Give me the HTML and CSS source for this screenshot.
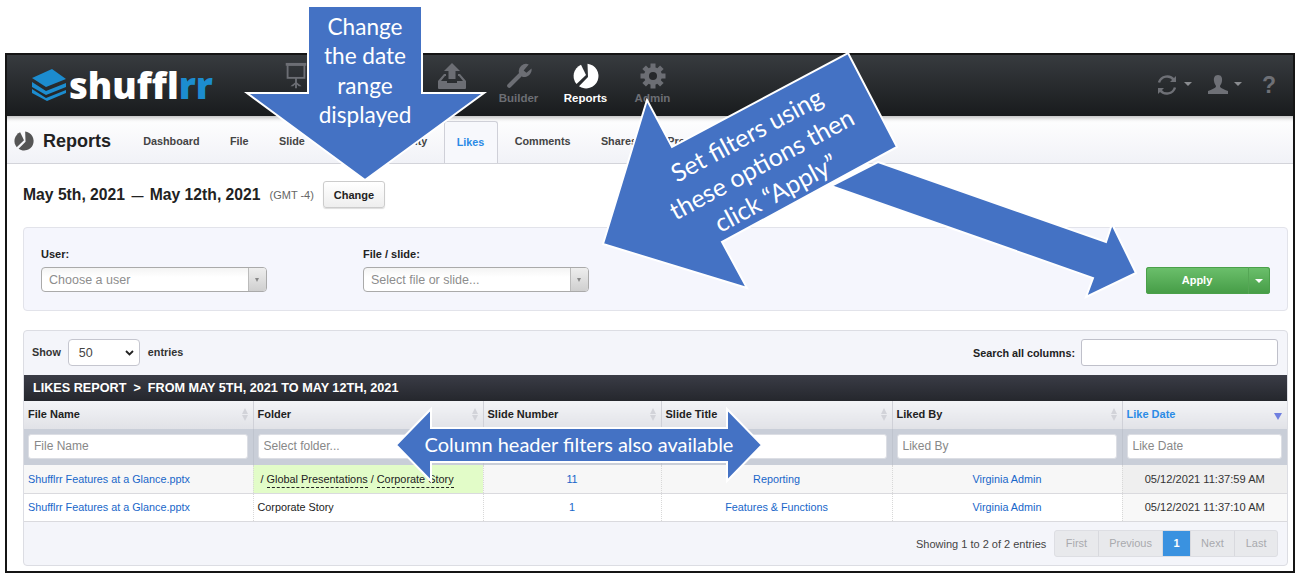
FILE: index.html
```html
<!DOCTYPE html>
<html>
<head>
  <title>Shufflrr - Likes Report</title>
  <link rel="stylesheet" href="styles.css">
</head>
<body>

<div class="frame">

  <header class="topbar">
    <a class="logo">
      <svg class="logo-mark" width="36" height="34" viewBox="0 0 36 34">
        <path class="blue" d="M1 10 L21 1 L35 11 L15 19 Z"/>
        <path class="blue" d="M1 14 L15 23 L35 15 L35 19 L15 27 L1 19 Z"/>
        <path class="blue" d="M1 21 L15 30 L35 22 L35 25 L16 33 L1 25 Z"/>
      </svg>
      <span>shuffl<b>rr</b></span>
    </a>
    <nav class="mainnav">
      <a class="navitem first">
        <svg width="26" height="30" viewBox="0 0 26 30">
          <rect x="4" y="3" width="18" height="14" fill="none" stroke="currentColor" stroke-width="2"/>
          <rect x="2" y="1" width="22" height="3"/>
          <path d="M12 17 h2 v5 l5 4 h-3 l-2 -2 v4 h-2 v-4 l-2 2 h-3 l5 -4 z"/>
        </svg>
      </a>
      <a class="navitem">
        <svg width="28" height="26" viewBox="0 0 28 26">
          <path d="M14 0 L22 8 H17.500 V16 H10.500 V8 H6 Z"/>
          <path d="M6 11 H8 V13 H7 L3 18 H9 V20 H19 V18 H25 L21 13 H20 V11 H22 L28 18 V25 Q28 26 27 26 H1 Q0 26 0 25 V18 Z"/>
        </svg>
      </a>
      <a class="navitem">
        <svg class="wrench" width="26" height="26" viewBox="0 0 28 28">
          <path d="M3.500 24.500 L17 11" stroke="currentColor" stroke-width="4.500" stroke-linecap="round"/>
          <path d="M24.500 1.500 A 8 8 0 0 0 14 11 L18 15 A 8 8 0 0 0 27.500 6 L22 10.500 L19 8 Z"/>
        </svg>
        <span>Builder</span>
      </a>
      <a class="navitem active">
        <svg width="26" height="26" viewBox="-13 -13 26 26">
          <use href="#pie" x="-13" y="-13" width="26" height="26"/>
        </svg>
        <span>Reports</span>
      </a>
      <a class="navitem">
        <svg width="26" height="26" viewBox="-13 -13 26 26">
          <circle r="6.500" fill="none" stroke="currentColor" stroke-width="5"/>
          <rect x="-2.500" y="-12.500" width="5" height="25"/>
          <rect x="-2.500" y="-12.500" width="5" height="25" transform="rotate(45)"/>
          <rect x="-2.500" y="-12.500" width="5" height="25" transform="rotate(90)"/>
          <rect x="-2.500" y="-12.500" width="5" height="25" transform="rotate(135)"/>
          <circle r="4" fill="#26282b"/>
        </svg>
        <span>Admin</span>
      </a>
    </nav>
    <div class="toptools">
      <a class="tool">
        <svg width="22" height="22" viewBox="0 0 22 22" fill="none" stroke="currentColor" stroke-width="2.500">
          <path d="M3 8.500 A 8.500 8.500 0 0 1 18 6"/>
          <path d="M19 13.500 A 8.500 8.500 0 0 1 4 16"/>
          <path d="M20 2 V8 H14 Z" fill="currentColor" stroke="none"/>
          <path d="M2 20 V14 H8 Z" fill="currentColor" stroke="none"/>
        </svg>
        <i class="caret"></i>
      </a>
      <a class="tool">
        <svg width="20" height="20" viewBox="0 0 20 20" fill="currentColor">
          <path d="M10 0 C13.500 0 14.500 3 14 6 C13.700 8 13 9.500 12 11 C12 13 14 13.500 20 16 V19 H0 V16 C6 13.500 8 13 8 11 C7 9.500 6.300 8 6 6 C5.500 3 6.500 0 10 0 Z"/>
        </svg>
        <i class="caret"></i>
      </a>
      <a class="tool help">?</a>
    </div>
  </header>

  <nav class="subnav">
    <div class="pagetitle">
      <svg width="20" height="20" viewBox="-13 -13 26 26">
        <use href="#pie" x="-13" y="-13" width="26" height="26"/>
      </svg>
      <h1>Reports</h1>
    </div>
    <ul class="tabs">
      <li>Dashboard</li>
      <li>File</li>
      <li>Slide</li>
      <li>Pins</li>
      <li>Activity</li>
      <li class="current">Likes</li>
      <li>Comments</li>
      <li>Shares</li>
      <li>Presenters</li>
    </ul>
  </nav>

  <main class="content">

    <div class="daterow">
      <span class="daterange">May 5th, 2021 <span class="dash">&mdash;</span> May 12th, 2021</span>
      <span class="gmt">(GMT -4)</span>
      <button class="btn-change">Change</button>
    </div>

    <section class="filters">
      <div class="field">
        <label>User:</label>
        <div class="combo"><span>Choose a user</span><i class="combo-arrow"></i></div>
      </div>
      <div class="field">
        <label>File / slide:</label>
        <div class="combo"><span>Select file or slide...</span><i class="combo-arrow"></i></div>
      </div>
      <div class="apply">
        <span class="apply-main">Apply</span>
        <span class="apply-drop"><i class="caret"></i></span>
      </div>
    </section>

    <section class="report">
      <div class="report-top">
        <div class="show">
          <span>Show</span>
          <div class="pagesize"><b>50</b>
            <svg width="9" height="6" viewBox="0 0 9 6" fill="none" stroke="#222" stroke-width="1.800"><path d="M1 1 L4.500 4.500 L8 1"/></svg>
          </div>
          <span>entries</span>
        </div>
        <div class="search">
          <span>Search all columns:</span>
          <input type="text">
        </div>
      </div>

      <div class="report-title">LIKES REPORT&nbsp; &gt;&nbsp; FROM MAY 5TH, 2021 TO MAY 12TH, 2021</div>

      <table class="grid">
        <colgroup>
          <col class="c-file"><col class="c-folder"><col class="c-num"><col class="c-title"><col class="c-by"><col class="c-date">
        </colgroup>
        <thead>
          <tr class="heads">
            <th><div class="th-in">File Name<i class="sort"></i></div></th>
            <th><div class="th-in">Folder<i class="sort"></i></div></th>
            <th><div class="th-in">Slide Number<i class="sort"></i></div></th>
            <th><div class="th-in">Slide Title<i class="sort"></i></div></th>
            <th><div class="th-in">Liked By<i class="sort"></i></div></th>
            <th class="sorted"><div class="th-in">Like Date<i class="sort-down"></i></div></th>
          </tr>
          <tr class="colfilters">
            <td><input type="text" placeholder="File Name"></td>
            <td><input type="text" placeholder="Select folder..."></td>
            <td><input type="text" placeholder="Slide Number"></td>
            <td><input type="text" placeholder="Slide Title"></td>
            <td><input type="text" placeholder="Liked By"></td>
            <td><input type="text" placeholder="Like Date"></td>
          </tr>
        </thead>
        <tbody>
          <tr class="odd">
            <td><a>Shufflrr Features at a Glance.pptx</a></td>
            <td class="folder-hit">/ <span class="crumb">Global Presentations</span> / <span class="crumb">Corporate Story</span></td>
            <td class="mid"><a>11</a></td>
            <td class="mid"><a>Reporting</a></td>
            <td class="mid"><a>Virginia Admin</a></td>
            <td class="mid datecell">05/12/2021 11:37:59 AM</td>
          </tr>
          <tr>
            <td><a>Shufflrr Features at a Glance.pptx</a></td>
            <td>Corporate Story</td>
            <td class="mid"><a>1</a></td>
            <td class="mid"><a>Features &amp; Functions</a></td>
            <td class="mid"><a>Virginia Admin</a></td>
            <td class="mid datecell">05/12/2021 11:37:10 AM</td>
          </tr>
        </tbody>
      </table>

      <div class="report-foot">
        <span>Showing 1 to 2 of 2 entries</span>
        <div class="pager">
          <a>First</a><a>Previous</a><a class="on">1</a><a>Next</a><a>Last</a>
        </div>
      </div>
    </section>

  </main>
</div>

<!-- callouts drawn over the screenshot -->
<svg class="callouts" width="1300" height="580" viewBox="0 0 1300 580">
  <defs>
    <symbol id="pie" viewBox="-13 -13 26 26">
      <path fill="currentColor" d="M1.500 -12.300 A 12.400 12.400 0 1 1 -7 10.200 L2 1 Z"/>
      <path fill="currentColor" d="M0 -1 L-5 -11.300 A 12.400 12.400 0 0 0 -9.500 8 Z"/>
    </symbol>
  </defs>
  <polygon class="arrow" points="308,6 422,6 422,93 484,93 365,180 247,93 308,93"/>
  <polygon class="arrow" points="878,162 1106,242 1112,224 1136,273 1086,297 1093,278 831,186"/>
  <polygon class="arrow" points="848,53 897,147 722,242 747,288 603,244 647,100 672,147"/>
  <polygon class="arrow" points="396,445 431,409 431,428 727,428 727,409 762,445 727,481 727,462 431,462 431,481"/>

  <text class="note big" x="365" y="35">Change</text>
  <text class="note big" x="365" y="64">the date</text>
  <text class="note big" x="365" y="94">range</text>
  <text class="note big" x="365" y="123">displayed</text>

  <text class="note mid" x="751" y="143" transform="rotate(-28.300 751 143)">Set filters using</text>
  <text class="note mid" x="766" y="172" transform="rotate(-28.300 766 172)">these options then</text>
  <text class="note mid" x="780" y="201" transform="rotate(-28.300 780 201)">click &#8220;Apply&#8221;</text>

  <text class="note wide" x="579" y="452">Column header filters also available</text>
</svg>

</body>
</html>
```

FILE: styles.css
```css
* {
  box-sizing: border-box;
}

html, body {
  margin: 0;
  height: 580px;
  overflow: hidden;
  background-color: white;
  font-family: "Liberation Sans", Arial, sans-serif;
  font-size: 11px;
  color: #222;
}

.frame {
  margin: 53px 5px 0 5px;
  height: 520px;
  border: 2px solid #151515;
  overflow: hidden;
  background-color: #fff;
}

/* top bar */
.topbar {
  display: flex;
  align-items: flex-start;
  height: 61px;
  background: linear-gradient(#373b3f, #191b1d);
  color: #6c6e74;
}

.logo {
  display: flex;
  align-items: center;
  gap: 2px;
  width: 255px;
  padding: 9px 0 0 24px;
  font-family: "Open Sans", sans-serif;
  font-size: 36.500px;
  font-weight: 800;
  line-height: 42px;
  color: white;
  font-variant-ligatures: none;
}

.logo b {
  font-weight: 800;
  color: #1c8ccf;
}

.blue {
  fill: #1c8ccf;
}

.mainnav {
  display: flex;
}

.navitem {
  display: flex;
  flex-direction: column;
  align-items: center;
  width: 67px;
  padding-top: 7px;
  font-size: 11.500px;
  font-weight: bold;
  fill: currentColor;
}

.navitem.first {
  margin-right: 89px;
}

.navitem svg {
  height: 28px;
}

.navitem span {
  margin-top: 2px;
}

.navitem.active {
  color: white;
}

.toptools {
  display: flex;
  align-items: center;
  margin-left: auto;
  height: 60px;
  padding-right: 17px;
  gap: 16px;
  color: #6e7076;
}

.tool {
  display: flex;
  align-items: center;
  gap: 6px;
}

.tool .caret {
  border-left-width: 4px;
  border-right-width: 4px;
  border-top-color: #8a8c90;
  margin-top: -2px;
}

.help {
  font-size: 23px;
  font-weight: bold;
  margin-left: 4px;
}

.caret {
  display: inline-block;
  width: 0;
  height: 0;
  border-left: 3.500px solid transparent;
  border-right: 3.500px solid transparent;
  border-top: 4px solid white;
}

/* tabs row */
.subnav {
  display: flex;
  align-items: flex-end;
  height: 48px;
  background: linear-gradient(#ffffff, #f1f2f7);
  border-bottom: 1px solid #d3d4da;
  box-shadow: inset 0 5px 4px -3px #bbb;
}

.pagetitle {
  display: flex;
  align-items: center;
  gap: 9px;
  width: 121px;
  height: 47px;
  padding: 2px 0 0 7px;
  color: #555;
}

.pagetitle h1 {
  margin: 0;
  font-size: 18px;
  line-height: 22px;
  color: #222;
}

.tabs {
  display: flex;
  margin: 0;
  padding: 0;
  list-style: none;
}

.tabs li {
  height: 42px;
  padding: 14px 15.200px 0 15.200px;
  font-size: 10.800px;
  font-weight: bold;
  color: #444;
}

.tabs .current {
  width: 54px;
  padding: 14px 0 0 0;
  text-align: center;
  color: #2b8be6;
  background-color: #f7f8fc;
  border: 1px solid #cfd0d8;
  border-bottom: none;
  border-radius: 3px 3px 0 0;
  margin: 0 2px 0 1px;
}

/* page body */
.content {
  padding: 0 5px 0 16px;
}

.daterow {
  display: flex;
  align-items: center;
  height: 63px;
  padding-bottom: 2px;
}

.daterange {
  font-size: 15.700px;
  font-weight: bold;
  color: #222;
}

.dash {
  margin: 0 2px;
  font-size: 12px;
}

.gmt {
  margin-left: 9px;
  color: #666;
}

.btn-change {
  width: 62px;
  height: 27px;
  margin-left: 9px;
  padding: 0;
  font-family: inherit;
  font-size: 11px;
  font-weight: bold;
  color: #222;
  background: linear-gradient(#ffffff, #eeeeee);
  border: 1px solid #ccc;
  border-radius: 3px;
  box-shadow: 0 1px 1px #ddd;
}

.filters {
  display: flex;
  align-items: flex-start;
  height: 84px;
  padding: 20px 17px 0 17px;
  background-color: #f5f6fd;
  border: 1px solid #e2e3ea;
  border-radius: 4px;
}

.field {
  width: 322px;
}

.field label {
  display: block;
  height: 19px;
  font-weight: bold;
  color: #222;
}

.combo {
  display: flex;
  align-items: center;
  justify-content: space-between;
  width: 226px;
  height: 25px;
  padding-left: 7px;
  font-size: 12.500px;
  color: #8d8d8d;
  background: linear-gradient(#f4f4f4, #ffffff 40%);
  border: 1px solid #aaa;
  border-radius: 4px;
}

.combo-arrow {
  position: relative;
  width: 18px;
  height: 100%;
  background: linear-gradient(#eeeeee, #cfcfcf);
  border-left: 1px solid #bbb;
  border-radius: 0 3px 3px 0;
}

.combo-arrow::after {
  content: "";
  position: absolute;
  left: 6px;
  top: 10px;
  border-left: 2.500px solid transparent;
  border-right: 2.500px solid transparent;
  border-top: 4px solid #888;
}

.apply {
  display: flex;
  align-items: stretch;
  margin: 19px 0 0 auto;
  width: 124px;
  height: 27px;
  color: white;
  font-weight: bold;
  background: linear-gradient(#6cc06c, #459c46);
  border-radius: 3px;
  box-shadow: 0 0 0 1px #4aa04a inset;
}

.apply-main {
  flex: 1;
  text-align: center;
  line-height: 27px;
}

.apply-drop {
  display: flex;
  align-items: center;
  justify-content: center;
  width: 22px;
  padding-right: 2px;
  border-left: 1px solid #55a655;
}

.apply-drop .caret {
  border-left-width: 4.500px;
  border-right-width: 4.500px;
}

.report {
  margin-top: 19px;
  height: 236px;
  background-color: #f4f5fa;
  border: 1px solid #dcdde3;
  border-radius: 4px;
}

.report-top {
  display: flex;
  justify-content: space-between;
  align-items: center;
  height: 44px;
  padding: 0 9px 1px 8px;
}

.show {
  display: flex;
  align-items: center;
  font-size: 10.800px;
  font-weight: bold;
  color: #333;
}

.show > span {
  margin-bottom: 2px;
}

.pagesize {
  display: flex;
  align-items: center;
  justify-content: space-between;
  width: 72px;
  height: 27px;
  margin: 0 8px 0 7px;
  padding: 0 5px 0 10px;
  background-color: #fff;
  border: 1px solid #c5c6cf;
  border-radius: 4px;
}

.pagesize b {
  font-size: 12.500px;
  font-weight: normal;
  color: #444;
}

.search {
  display: flex;
  align-items: center;
  gap: 6px;
  font-size: 10.800px;
  font-weight: bold;
}

.search input {
  width: 197px;
  height: 27px;
  background-color: #fff;
  border: 1px solid #bfc0ca;
  border-radius: 3px;
}

.report-title {
  height: 26px;
  padding-left: 9px;
  font-size: 12.650px;
  font-weight: bold;
  line-height: 26px;
  color: white;
  background: linear-gradient(#3a3c46, #25272d);
}

.grid {
  width: 100%;
  table-layout: fixed;
  border-collapse: collapse;
  font-size: 10.800px;
}

.c-file { width: 229px; }
.c-folder { width: 230px; }
.c-num { width: 178px; }
.c-title { width: 231px; }
.c-by { width: 230px; }
.c-date { width: 165px; }

.heads th {
  height: 28px;
  padding: 0 5px 2px 4px;
  font-size: 11px;
  font-weight: bold;
  text-align: left;
  color: #222;
  background: linear-gradient(#f3f4f7, #e1e2e7);
  border-left: 1px solid #d0d1d8;
}

.heads th:first-child {
  border-left: none;
}

.th-in {
  display: flex;
  align-items: center;
  justify-content: space-between;
}

.heads .sorted {
  color: #2b8be6;
}

.sort {
  display: flex;
  flex-direction: column;
  gap: 1px;
}

.sort::before {
  content: "";
  border-left: 3.500px solid transparent;
  border-right: 3.500px solid transparent;
  border-bottom: 6px solid #d2d3d9;
}

.sort::after {
  content: "";
  border-left: 3.500px solid transparent;
  border-right: 3.500px solid transparent;
  border-top: 6px solid #d2d3d9;
}

.sort-down {
  align-self: flex-end;
  border-left: 4px solid transparent;
  border-right: 4px solid transparent;
  border-top: 7px solid #6f7fe0;
}

.colfilters td {
  height: 36px;
  padding: 0 5px 2px 4px;
  background-color: #c9ced8;
  border-left: 1px solid #bfc4ce;
}

.colfilters td:first-child {
  border-left: none;
}

.colfilters input {
  display: block;
  width: 100%;
  height: 25px;
  padding: 0 5px;
  font-family: inherit;
  font-size: 12px;
  background-color: #fff;
  border: 1px solid #dcdee4;
  border-radius: 3px;
}

.colfilters input::placeholder {
  color: #888;
}

tbody td {
  height: 28px;
  padding: 0 4px;
  color: #222;
  background-color: #fff;
  border-bottom: 1px solid #dadade;
  border-left: 1px dotted #d8d8d8;
}

tbody td:first-child {
  border-left: none;
}

tbody a {
  color: #1866c9;
}

tbody .odd td {
  background-color: #f7f7f7;
}

tbody .odd .folder-hit {
  padding-left: 7px;
  font-size: 10.900px;
  background-color: #e2fcc8;
}

tbody td.datecell {
  font-size: 11.100px;
  color: #333;
  background-color: #f8f8f8;
}

tbody .odd td.datecell {
  background-color: #efefef;
}

.crumb {
  padding-bottom: 2px;
  border-bottom: 1px dashed #222;
}

.mid {
  text-align: center;
}

.report-foot {
  display: flex;
  align-items: center;
  justify-content: flex-end;
  gap: 8px;
  height: 44px;
  padding: 0 9px 0 0;
  color: #444;
}

.pager {
  display: flex;
  height: 27px;
  background-color: #e8e9ec;
  border: 1px solid #dddee3;
  border-radius: 3px;
}

.pager a {
  padding: 0 10.500px;
  line-height: 25px;
  color: #a9aaae;
  border-left: 1px solid #d8d9de;
}

.pager a:first-child {
  border-left: none;
}

.pager .on {
  padding: 0 10px;
  font-weight: bold;
  color: white;
  background-color: #3a92e0;
}

/* blue arrows over the page */
.callouts {
  position: absolute;
  left: 0;
  top: 0;
}

.arrow {
  fill: #4472c4;
  stroke: white;
  stroke-width: 2;
}

.note {
  font-family: Lato, sans-serif;
  fill: white;
  text-anchor: middle;
}

.note.big {
  font-size: 22.600px;
}

.note.mid {
  font-size: 25px;
}

.note.wide {
  font-size: 20px;
}
```
